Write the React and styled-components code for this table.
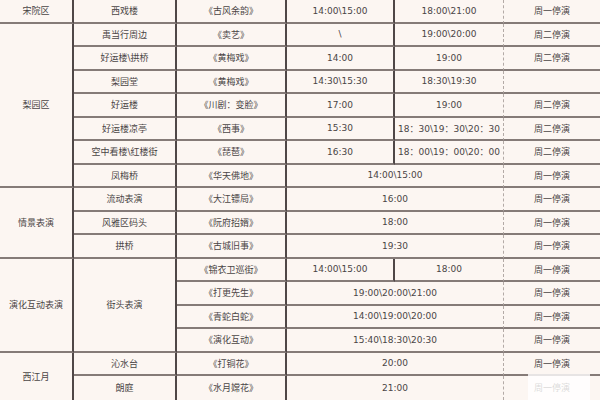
import React from "react";
import styled, { createGlobalStyle, css } from "styled-components";

const Global = createGlobalStyle`
  html, body { margin: 0; padding: 0; background: #fcf6f2; }
  body { width: 600px; height: 400px; overflow: hidden; }
`;

const Table = styled.div`
  position: relative;
  width: 600px;
  height: 400px;
  overflow: hidden;
  display: grid;
  grid-template-columns: 74px 103px 110px 108px 109px 96px;
  grid-template-rows: repeat(17, 23.5px);
  background: #fcf6f2;
  font-family: "DejaVu Sans", "Noto Sans CJK SC", sans-serif;
  font-size: 9px;
  color: #4a4545;
`;

const lineFor = (end) => {
  if (end === 6) return css`border-right: none;`;
  if (end === 5) return css`border-right: 1px dashed #b3aaa6;`;
  return css`border-right: 2px solid #4f4747;`;
};

const Cell = styled.div`
  box-sizing: border-box;
  grid-row: ${(p) => p.$row} / span ${(p) => p.$rs || 1};
  grid-column: ${(p) => p.$col} / span ${(p) => p.$cs || 1};
  display: flex;
  align-items: center;
  justify-content: center;
  text-align: center;
  white-space: nowrap;
  border-bottom: ${(p) => (p.$last ? "none" : "2px solid #857b78")};
  ${(p) => lineFor(p.$col + (p.$cs || 1) - 1)}
`;

const Veil = styled.div`
  position: absolute;
  left: 528px;
  top: 374px;
  width: 62px;
  height: 26px;
  background: rgba(255, 255, 255, 0.8);
`;

// [row, col, text, rowSpan, colSpan]
const cells = [
  [1, 1, "宋院区"],
  [1, 2, "西戏楼"],
  [1, 3, "《古风余韵》"],
  [1, 4, "14:00\\15:00"],
  [1, 5, "18:00\\21:00"],
  [1, 6, "周一停演"],

  [2, 1, "梨园区", 7],
  [2, 2, "禹当行周边"],
  [2, 3, "《卖艺》"],
  [2, 4, "\\"],
  [2, 5, "19:00\\20:00"],
  [2, 6, "周二停演"],

  [3, 2, "好运楼\\拱桥"],
  [3, 3, "《黄梅戏》"],
  [3, 4, "14:00"],
  [3, 5, "19:00"],
  [3, 6, "周二停演"],

  [4, 2, "梨园堂"],
  [4, 3, "《黄梅戏》"],
  [4, 4, "14:30\\15:30"],
  [4, 5, "18:30\\19:30"],
  [4, 6, ""],

  [5, 2, "好运楼"],
  [5, 3, "《川剧：变脸》"],
  [5, 4, "17:00"],
  [5, 5, "19:00"],
  [5, 6, "周二停演"],

  [6, 2, "好运楼凉亭"],
  [6, 3, "《西事》"],
  [6, 4, "15:30"],
  [6, 5, "18：30\\19：30\\20：30"],
  [6, 6, "周二停演"],

  [7, 2, "空中看楼\\红楼街"],
  [7, 3, "《琵琶》"],
  [7, 4, "16:30"],
  [7, 5, "18：00\\19：00\\20：00"],
  [7, 6, "周二停演"],

  [8, 2, "凤梅桥"],
  [8, 3, "《华天佛地》"],
  [8, 4, "14:00\\15:00", 1, 2],
  [8, 6, "周一停演"],

  [9, 1, "情景表演", 3],
  [9, 2, "流动表演"],
  [9, 3, "《大江镖局》"],
  [9, 4, "16:00", 1, 2],
  [9, 6, "周一停演"],

  [10, 2, "风雅区码头"],
  [10, 3, "《阮府招婿》"],
  [10, 4, "18:00", 1, 2],
  [10, 6, "周一停演"],

  [11, 2, "拱桥"],
  [11, 3, "《古城旧事》"],
  [11, 4, "19:30", 1, 2],
  [11, 6, "周一停演"],

  [12, 1, "演化互动表演", 4],
  [12, 2, "街头表演", 4],
  [12, 3, "《锦衣卫巡街》"],
  [12, 4, "14:00\\15:00"],
  [12, 5, "18:00"],
  [12, 6, "周一停演"],

  [13, 3, "《打更先生》"],
  [13, 4, "19:00\\20:00\\21:00", 1, 2],
  [13, 6, "周一停演"],

  [14, 3, "《青蛇白蛇》"],
  [14, 4, "14:00\\19:00\\20:00", 1, 2],
  [14, 6, "周一停演"],

  [15, 3, "《演化互动》"],
  [15, 4, "15:40\\18:30\\20:30", 1, 2],
  [15, 6, "周一停演"],

  [16, 1, "西江月", 2],
  [16, 2, "沁水台"],
  [16, 3, "《打铜花》"],
  [16, 4, "20:00", 1, 2],
  [16, 6, "周一停演"],

  [17, 2, "朗庭"],
  [17, 3, "《水月嫦花》"],
  [17, 4, "21:00", 1, 2],
  [17, 6, "周一停演"],
];

export default function App() {
  return (
    <>
      <Global />
      <Table>
        {cells.map(([row, col, text, rs = 1, cs = 1]) => (
          <Cell
            key={`${row}-${col}`}
            $row={row}
            $col={col}
            $rs={rs}
            $cs={cs}
            $last={row + rs - 1 >= 17}
          >
            {text}
          </Cell>
        ))}
        <Veil />
      </Table>
    </>
  );
}
